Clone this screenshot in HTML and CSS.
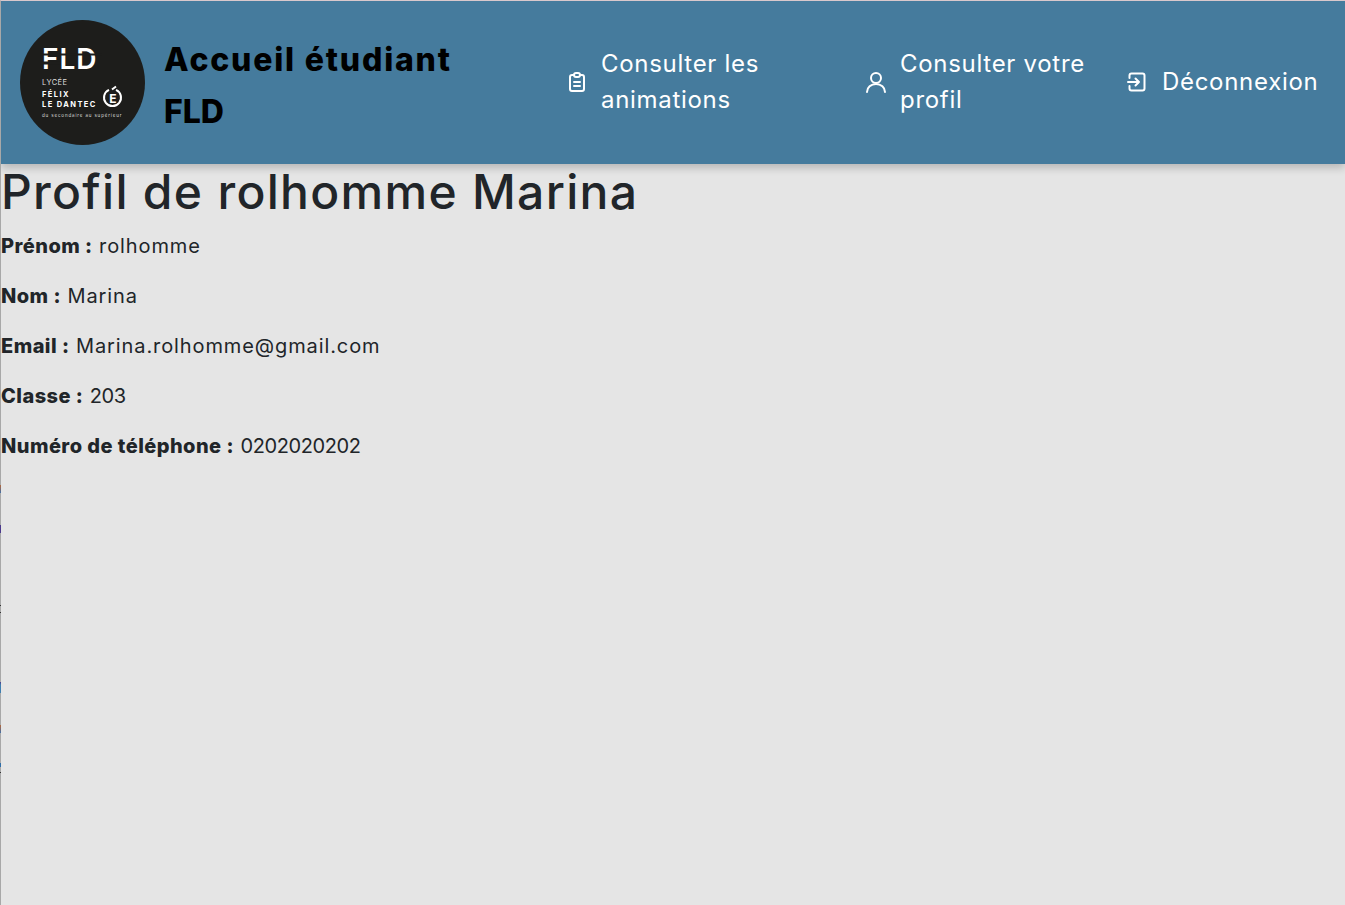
FILE: index.html
```html
<!DOCTYPE html>
<html lang="fr">

<head>
    <meta charset="UTF-8" />
    <meta name="viewport" content="width=device-width, initial-scale=1.0" />
    <title>Profil de rolhomme Marina</title>
    <link rel="stylesheet" href="styles.css">
</head>

<body>
    <header class="topbar">
        <div class="brand">
            <svg class="logo" viewBox="0 0 125 125" aria-label="Lycée Félix Le Dantec">
                <circle cx="62.5" cy="62.5" r="62.5" fill="#1d1d1b" />
                <text class="logo-fld" x="22" y="49">FLD</text>
                <rect x="20" y="33.5" width="62" height="2" fill="#1d1d1b" />
                <rect x="20" y="41.5" width="20" height="3" fill="#1d1d1b" />
                <text class="logo-lycee" x="22" y="65">LYCÉE</text>
                <text class="logo-name" x="22" y="77">FÉLIX</text>
                <text class="logo-name" x="22" y="87">LE DANTEC</text>
                <text class="logo-sub" x="22" y="97">du secondaire au supérieur</text>
                <path class="logo-ring" d="M89 69.800a8.500 8.500 0 1 0 7 0" />
                <path class="logo-ring" d="M92 69.500l4-3" />
                <text class="logo-e" x="93" y="82.500">E</text>
            </svg>
            <h2 class="brand-title"><span class="brand-first">Accueil étudiant</span> FLD</h2>
        </div>
        <nav class="nav">
            <a class="nav-link nav-animations" href="#">
                <svg class="icon" viewBox="0 0 24 24"><path d="M9 5H7a2 2 0 0 0-2 2v12a2 2 0 0 0 2 2h10a2 2 0 0 0 2-2V7a2 2 0 0 0-2-2h-2" /><rect x="9" y="3" width="6" height="4" rx="2" /><path d="M9 12h6M9 16h6" /></svg>
                <span>Consulter les animations</span>
            </a>
            <a class="nav-link nav-profil" href="#">
                <svg class="icon" viewBox="0 0 24 24"><circle cx="12" cy="8" r="5" /><path d="M3 22c0-4.500 4-8 9-8s9 3.500 9 8" /></svg>
                <span>Consulter votre profil</span>
            </a>
            <a class="nav-link nav-logout" href="#">
                <svg class="icon" viewBox="0 0 24 24"><path d="M4.500 8V5.500a2 2 0 0 1 2-2h11a2 2 0 0 1 2 2v13a2 2 0 0 1-2 2h-11a2 2 0 0 1-2-2V16" /><path d="M3 12h11M10.500 8.500L14 12l-3.500 3.500" /></svg>
                <span>Déconnexion</span>
            </a>
        </nav>
    </header>

    <main>
        <h1>Profil de rolhomme Marina</h1>
        <p><strong>Prénom :</strong> rolhomme</p>
        <p><strong>Nom :</strong> Marina</p>
        <p><strong>Email :</strong> Marina.rolhomme@gmail.com</p>
        <p><strong>Classe :</strong> <span class="num">203</span></p>
        <p><strong>Numéro de téléphone :</strong> <span class="num">0202020202</span></p>
    </main>
</body>

</html>
```

FILE: styles.css
```css
html {
    height: 100%;
}

body {
    margin: 0;
    min-height: 100%;
    box-sizing: border-box;
    background-color: #e5e5e5;
    border-left: 1px solid #a8a8a8;
    border-top: 1px solid #d9c8cc;
    font-family: "Inter", "Open Sans", sans-serif;
    color: #212529;
}

/* marks on the left edge of the window */
body::before {
    content: "";
    position: absolute;
    left: 0;
    top: 480px;
    width: 1px;
    height: 300px;
    background: linear-gradient(to bottom,
            transparent 5px, #b5673a 5px, #3f6fa8 13px, transparent 13px,
            transparent 45px, #4b3a8c 45px, #4b3a8c 53px, transparent 53px,
            transparent 125px, #333 125px, #333 126px, transparent 126px,
            transparent 132px, #333 132px, #333 133px, transparent 133px,
            transparent 202px, #4b3a8c 202px, #3f7fb0 205px, #3f7fb0 213px, transparent 213px,
            transparent 245px, #b5673a 245px, #3f6fa8 253px, transparent 253px,
            transparent 283px, #2f6ea8 283px, #2f6ea8 287px, transparent 287px,
            transparent 292px, #333 292px, #333 293px, transparent 293px);
}

.topbar {
    display: flex;
    align-items: center;
    height: 163px;
    background-color: #457b9d;
    box-shadow: 0 4px 8px rgba(0, 0, 0, 0.2);
}

.brand {
    display: flex;
    align-items: center;
    gap: 19px;
    width: 548px;
    padding-left: 19px;
    box-sizing: border-box;
}

.logo {
    width: 125px;
    height: 125px;
    flex: none;
}

.logo-fld {
    font: 600 28px "Inter", sans-serif;
    letter-spacing: 1px;
    fill: #fff;
}

.logo-lycee {
    font: 400 7.5px "Inter", sans-serif;
    letter-spacing: 0.4px;
    fill: #ddd;
}

.logo-name {
    font: 700 7.5px "Inter", sans-serif;
    letter-spacing: 1.4px;
    fill: #fff;
}

.logo-sub {
    font: 400 4.5px "Inter", sans-serif;
    letter-spacing: 0.85px;
    fill: #ddd;
}

.logo-ring {
    fill: none;
    stroke: #fff;
    stroke-width: 2;
}

.logo-e {
    font: 700 12px "Inter", sans-serif;
    text-anchor: middle;
    fill: #fff;
}

.brand-title {
    margin: 7px 0 0;
    width: 320px;
    font-size: 32px;
    font-weight: 800;
    line-height: 52px;
    color: #000;
}

.brand-first {
    letter-spacing: 1.8px;
}

.nav {
    display: flex;
    align-items: center;
    flex: 1;
    padding-bottom: 2px;
}

.nav-link {
    display: flex;
    align-items: center;
    gap: 12px;
    font-size: 24px;
    line-height: 36px;
    letter-spacing: 0.7px;
    color: #fff;
    text-decoration: none;
}

.nav-animations {
    width: 299px;
    padding-left: 16px;
    box-sizing: border-box;
}

.nav-profil {
    width: 277px;
    padding-left: 16px;
    box-sizing: border-box;
}

.nav-logout {
    gap: 13px;
    white-space: nowrap;
}

.nav-animations span {
    width: 200px;
}

.nav-profil span {
    width: 200px;
}

.icon {
    width: 24px;
    height: 24px;
    flex: none;
    fill: none;
    stroke: #fff;
    stroke-width: 2;
    stroke-linecap: round;
    stroke-linejoin: round;
}

h1 {
    margin: 0 0 10px;
    font-size: 48px;
    font-weight: 500;
    line-height: 55px;
    letter-spacing: 1.3px;
}

p {
    margin: 0 0 16px;
    font-size: 20px;
    line-height: 34px;
    letter-spacing: 0.9px;
}

strong {
    font-weight: 800;
    letter-spacing: 0.45px;
}

.num {
    letter-spacing: -0.4px;
}
```
